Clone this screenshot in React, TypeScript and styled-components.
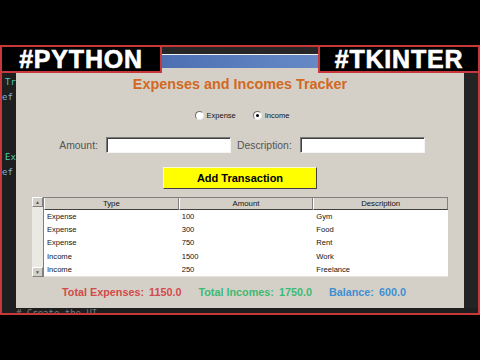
import React from "react"
import styled, { createGlobalStyle } from "styled-components"

const GlobalStyle = createGlobalStyle`
  html, body {
    margin: 0;
    padding: 0;
    background: #000;
    width: 480px;
    height: 360px;
    overflow: hidden;
    font-family: "Liberation Sans", Arial, sans-serif;
  }
`

const Stage = styled.div`
  width: 480px;
  height: 360px;
  background: #000;
  padding-top: 45px;
  box-sizing: border-box;
`

const Frame = styled.div`
  position: relative;
  width: 480px;
  height: 270px;
  box-sizing: border-box;
  border: 2px solid #c8383a;
  background: #1e1e1e;
  display: flex;
  flex-direction: column;
`

const Badge = styled.div<{ $side: "left" | "right" }>`
  position: absolute;
  top: -2px;
  ${p => (p.$side === "left" ? "left: -2px;" : "right: -2px;")}
  width: 162px;
  height: 28px;
  box-sizing: border-box;
  background: #000;
  border: 2px solid #c8383a;
  display: flex;
  align-items: center;
  justify-content: center;
  color: #fff;
  font-family: "Liberation Sans", Arial, sans-serif;
  font-weight: bold;
  font-size: 25px;
  letter-spacing: 0.8px;
  -webkit-text-stroke: 0.6px #fff;
  z-index: 2;
`

const TopStrip = styled.div`
  height: 7px;
  background: #262626;
`

const Middle = styled.div`
  display: flex;
  flex: 1;
  min-height: 0;
`

const Gutter = styled.div`
  width: 14px;
  flex: none;
  background: #1e1e1e;
  overflow: hidden;
  padding-top: 21px;
  box-sizing: border-box;
  font-family: "DejaVu Sans Mono", monospace;
  font-size: 9px;
  line-height: 15px;
  white-space: pre;
`

const CodeLine = styled.div<{ $color: string; $indent: number }>`
  height: 15px;
  color: ${p => p.$color};
  padding-left: ${p => p.$indent}px;
`

const RightGutter = styled.div`
  width: 14px;
  flex: none;
  background: #232323;
`

const Window = styled.div`
  flex: 1;
  display: flex;
  flex-direction: column;
  min-width: 0;
`

const TitleBar = styled.div`
  height: 14px;
  flex: none;
  border-top: 1px solid #f2f2f2;
  box-sizing: border-box;
  background: linear-gradient(to right, #3557a0, #7ea2d8);
`

const Content = styled.div`
  height: 240px;
  background: #d4d0c8;
  display: flex;
  flex-direction: column;
  align-items: center;
  padding-top: 8px;
  box-sizing: border-box;
`

const Title = styled.div`
  height: 17px;
  line-height: 17px;
  font-size: 14.4px;
  font-weight: bold;
  color: #d2691e;
`

const RadioRow = styled.div`
  margin-top: 16px;
  margin-left: 4px;
  height: 12px;
  display: flex;
  align-items: center;
  gap: 17px;
`

const RadioItem = styled.label`
  display: flex;
  align-items: center;
  gap: 3px;
  font-size: 7.5px;
  color: #111;
`

const RadioDot = styled.span<{ $checked: boolean }>`
  width: 9px;
  height: 9px;
  box-sizing: border-box;
  border-radius: 50%;
  background: #fff;
  border: 1px solid;
  border-color: #6e6e6e #e8e8e8 #e8e8e8 #6e6e6e;
  display: flex;
  align-items: center;
  justify-content: center;
  &::after {
    content: "";
    width: 3px;
    height: 3px;
    border-radius: 50%;
    background: ${p => (p.$checked ? "#000" : "transparent")};
  }
`

const EntryRow = styled.div`
  margin-top: 16px;
  margin-left: 4px;
  height: 16px;
  display: flex;
  align-items: center;
`

const FieldLabel = styled.span<{ $gapLeft?: number }>`
  font-size: 10.4px;
  color: #555;
  margin-left: ${p => p.$gapLeft ?? 0}px;
  margin-right: 8px;
`

const Entry = styled.div`
  width: 125px;
  height: 16px;
  box-sizing: border-box;
  background: #fff;
  border: 1px solid;
  border-color: #7a7a7a #f4f4f4 #f4f4f4 #7a7a7a;
  box-shadow: inset 1px 1px 0 #404040;
`

const AddButton = styled.div`
  margin-top: 14px;
  width: 154px;
  height: 22px;
  box-sizing: border-box;
  background: #ffff00;
  border: 1px solid;
  border-color: #fbfbd0 #404040 #404040 #fbfbd0;
  display: flex;
  align-items: center;
  justify-content: center;
  font-size: 11px;
  font-weight: bold;
  color: #000;
`

const Tree = styled.div`
  margin-top: 8px;
  width: 416px;
  height: 80px;
  display: flex;
  box-sizing: border-box;
`

const ScrollBar = styled.div`
  width: 11px;
  flex: none;
  background: #ebe9e4;
  display: flex;
  flex-direction: column;
  justify-content: space-between;
  border-right: 1px solid #808080;
`

const ScrollButton = styled.div`
  height: 10px;
  background: #d4d0c8;
  border: 1px solid;
  border-color: #fff #808080 #808080 #fff;
  box-sizing: border-box;
  display: flex;
  align-items: center;
  justify-content: center;
  font-size: 5px;
  color: #555;
`

const Table = styled.div`
  flex: 1;
  display: flex;
  flex-direction: column;
  background: #fff;
  border-bottom: 1px solid #e6e3dc;
`

const HeaderRow = styled.div`
  height: 13px;
  display: grid;
  grid-template-columns: 1fr 1fr 1fr;
  background: #d4d0c8;
  border-top: 1px solid #808080;
  box-sizing: border-box;
`

const HeaderCell = styled.div`
  font-size: 7.8px;
  color: #111;
  display: flex;
  align-items: center;
  justify-content: center;
  border-left: 1px solid #fff;
  border-right: 1px solid #808080;
  border-bottom: 1px solid #404040;
`

const Row = styled.div`
  height: 13.4px;
  display: grid;
  grid-template-columns: 1fr 1fr 1fr;
  align-items: center;
`

const Cell = styled.div`
  font-size: 7.6px;
  color: #111;
  padding-left: 3px;
`

const Totals = styled.div`
  margin-top: 8px;
  margin-right: 12px;
  height: 14px;
  display: flex;
  align-items: center;
  gap: 17px;
  font-size: 10.8px;
  font-weight: bold;
`

const Total = styled.div<{ $color: string }>`
  color: ${p => p.$color};
  display: flex;
  gap: 5px;
`

const BottomStrip = styled.div`
  height: 5px;
  overflow: hidden;
  padding-left: 14px;
  font-family: "DejaVu Sans Mono", monospace;
  font-size: 9px;
  line-height: 9px;
  color: #7c7c7c;
  white-space: pre;
  padding-top: 1px;
  box-sizing: border-box;
`

const codeLines = [
  { text: "Tr", color: "#4ec9b0", indent: 3 },
  { text: "ef", color: "#7fb0dc", indent: 0 },
  { text: "", color: "#ccc", indent: 0 },
  { text: "", color: "#ccc", indent: 0 },
  { text: "", color: "#ccc", indent: 0 },
  { text: "Ex", color: "#4ec9b0", indent: 3 },
  { text: "ef", color: "#7fb0dc", indent: 0 },
]

const transactions = [
  ["Expense", "100", "Gym"],
  ["Expense", "300", "Food"],
  ["Expense", "750", "Rent"],
  ["Income", "1500", "Work"],
  ["Income", "250", "Freelance"],
]

const App = () => {
  return (
    <Stage>
      <GlobalStyle />
      <Frame>
        <Badge $side="left">#PYTHON</Badge>
        <Badge $side="right">#TKINTER</Badge>
        <TopStrip />
        <Middle>
          <Gutter>
            {codeLines.map((l, i) => (
              <CodeLine key={i} $color={l.color} $indent={l.indent}>
                {l.text}
              </CodeLine>
            ))}
          </Gutter>
          <Window>
            <TitleBar />
            <Content>
              <Title>Expenses and Incomes Tracker</Title>
              <RadioRow>
                <RadioItem>
                  <RadioDot $checked={false} />
                  Expense
                </RadioItem>
                <RadioItem>
                  <RadioDot $checked={true} />
                  Income
                </RadioItem>
              </RadioRow>
              <EntryRow>
                <FieldLabel>Amount:</FieldLabel>
                <Entry />
                <FieldLabel $gapLeft={6}>Description:</FieldLabel>
                <Entry />
              </EntryRow>
              <AddButton>Add Transaction</AddButton>
              <Tree>
                <ScrollBar>
                  <ScrollButton>▲</ScrollButton>
                  <ScrollButton>▼</ScrollButton>
                </ScrollBar>
                <Table>
                  <HeaderRow>
                    <HeaderCell>Type</HeaderCell>
                    <HeaderCell>Amount</HeaderCell>
                    <HeaderCell>Description</HeaderCell>
                  </HeaderRow>
                  {transactions.map((t, i) => (
                    <Row key={i}>
                      {t.map((c, j) => (
                        <Cell key={j}>{c}</Cell>
                      ))}
                    </Row>
                  ))}
                </Table>
              </Tree>
              <Totals>
                <Total $color="#d24a4a">
                  <span>Total Expenses:</span>
                  <span>1150.0</span>
                </Total>
                <Total $color="#3dba72">
                  <span>Total Incomes:</span>
                  <span>1750.0</span>
                </Total>
                <Total $color="#3f8fd2">
                  <span>Balance:</span>
                  <span>600.0</span>
                </Total>
              </Totals>
            </Content>
          </Window>
          <RightGutter />
        </Middle>
        <BottomStrip># Create the UI</BottomStrip>
      </Frame>
    </Stage>
  )
}

export default App
